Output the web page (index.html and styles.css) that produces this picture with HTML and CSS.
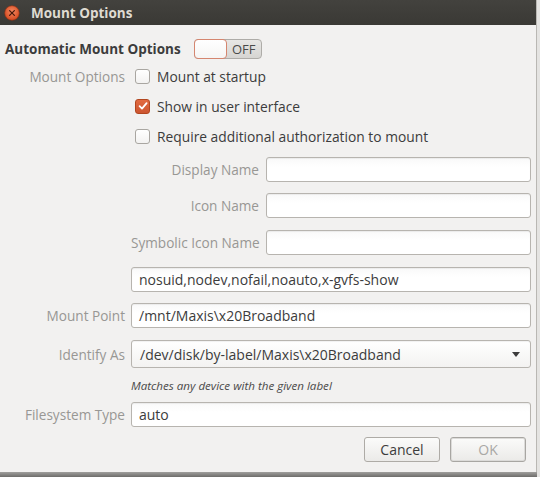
FILE: index.html
```html
<!DOCTYPE html>
<html lang="en">
<head>
  <meta charset="UTF-8" />
  <title>Mount Options</title>
  <link rel="stylesheet" href="styles.css">
</head>
<body>
  <div class="window">
    <div class="titlebar">
      <svg class="close" width="16" height="16" viewBox="0 0 16 16">
        <defs>
          <radialGradient id="cg" cx="50%" cy="40%" r="60%">
            <stop offset="0" stop-color="#f58a62" />
            <stop offset="1" stop-color="#d4481e" />
          </radialGradient>
        </defs>
        <circle cx="8" cy="8" r="7.3" fill="url(#cg)" stroke="#8e2f12" stroke-width="0.6" />
        <path d="M5.6 5.6 L10.4 10.4 M10.4 5.6 L5.6 10.4" stroke="#4a1a0c" stroke-width="1.3" stroke-linecap="round" />
      </svg>
      <span class="title">Mount Options</span>
    </div>

    <div class="content">
      <div class="auto-row">
        <span class="auto-label">Automatic Mount Options</span>
        <div class="switch">
          <span class="knob"></span>
          <span class="switch-text">OFF</span>
        </div>
      </div>

      <div class="row check-row first">
        <span class="label">Mount Options</span>
        <div class="cell"><span class="box"></span>Mount at startup</div>
      </div>
      <div class="row check-row">
        <span class="label"></span>
        <div class="cell">
          <span class="box checked">
            <svg width="10" height="10" viewBox="0 0 10 10"><path d="M1.6 5.2 L4 7.6 L8.6 2.2" fill="none" stroke="#fff" stroke-width="1.8" stroke-linecap="round" stroke-linejoin="round" /></svg>
          </span>Show in user interface
        </div>
      </div>
      <div class="row check-row">
        <span class="label"></span>
        <div class="cell"><span class="box"></span>Require additional authorization to mount</div>
      </div>

      <div class="row sub r-display">
        <span class="label"></span>
        <div class="cell">
          <span class="sublabel">Display Name</span>
          <div class="entry"></div>
        </div>
      </div>
      <div class="row sub r-icon">
        <span class="label"></span>
        <div class="cell">
          <span class="sublabel">Icon Name</span>
          <div class="entry"></div>
        </div>
      </div>
      <div class="row sub r-symbolic">
        <span class="label"></span>
        <div class="cell">
          <span class="sublabel">Symbolic Icon Name</span>
          <div class="entry"></div>
        </div>
      </div>

      <div class="row r-options">
        <span class="label"></span>
        <div class="entry">nosuid,nodev,nofail,noauto,x-gvfs-show</div>
      </div>
      <div class="row r-mount">
        <span class="label">Mount Point</span>
        <div class="entry">/mnt/Maxis\x20Broadband</div>
      </div>
      <div class="row r-identify">
        <span class="label">Identify As</span>
        <div class="entry combo">
          <span>/dev/disk/by-label/Maxis\x20Broadband</span>
          <span class="arrow"></span>
        </div>
      </div>
      <div class="row r-hint">
        <span class="label"></span>
        <span class="hint">Matches any device with the given label</span>
      </div>
      <div class="row r-fs">
        <span class="label">Filesystem Type</span>
        <div class="entry">auto</div>
      </div>

      <div class="buttons">
        <button class="btn">Cancel</button>
        <button class="btn default" disabled>OK</button>
      </div>
    </div>
  </div>
  <div class="shadow"></div>
</body>
</html>
```

FILE: styles.css
```css
* { box-sizing: border-box; }
body {
  margin: 0;
  width: 540px;
  height: 477px;
  overflow: hidden;
  background: #e4e3e1;
  font-family: 'Open Sans', sans-serif;
  font-size: 13.8px;
  color: #3c3c3c;
}
.window {
  width: 537px;
  height: 472px;
  background: #f2f1f0;
  border-right: 1px solid #b9b7b3;
}
.titlebar {
  height: 25px;
  background: linear-gradient(#43423e, #3a3935);
  display: flex;
  align-items: center;
  padding-left: 4px;
  gap: 11px;
}
.close { display: block; }
.title {
  color: #dfdbd2;
  font-weight: bold;
  font-size: 13.5px;
}
.content {
  padding: 13px 5px 0 0;
}
.auto-row {
  display: flex;
  align-items: center;
  gap: 13px;
  height: 20px;
  margin-top: 1px;
  padding-left: 5px;
}
.auto-label {
  font-weight: bold;
  font-size: 13.5px;
  color: #3c3c3c;
}
.switch {
  width: 68px;
  height: 20px;
  display: flex;
  border: 1px solid #aeaca8;
  border-radius: 4px;
  background: linear-gradient(#e8e7e5, #d6d5d2);
}
.knob {
  width: 33px;
  margin: -1px 0 -1px -1px;
  border: 1px solid #d5866f;
  border-radius: 4px;
  background: linear-gradient(#ffffff, #f6f5f4);
}
.switch-text {
  flex: 1;
  text-align: center;
  line-height: 18px;
  font-size: 13px;
  color: #4a4a4a;
}

.row {
  display: flex;
  align-items: center;
  gap: 6px;
}
.label,
.sublabel {
  flex: none;
  text-align: right;
  white-space: nowrap;
  font-size: 13.6px;
  color: #989794;
}
.label { width: 125px; }
.sublabel { width: 128px; }
.row .cell {
  flex: 1;
  display: flex;
  align-items: center;
}
.check-row { height: 30px; }
.check-row.first { margin-top: 2px; }
.check-row .cell { padding-left: 4px; }
.box {
  width: 15px;
  height: 15px;
  margin-right: 7px;
  border: 1px solid #a9a6a1;
  border-radius: 3px;
  background: linear-gradient(#ffffff, #f3f2f1);
  display: flex;
  align-items: center;
  justify-content: center;
}
.box.checked {
  background: linear-gradient(#e26b41, #cc5530);
  border-color: #b2461f;
}
.box svg { display: block; }

.sub .cell { gap: 7px; }
.entry {
  flex: 1;
  height: 25px;
  border: 1px solid #b7b4af;
  border-radius: 3px;
  background: linear-gradient(#f9f9f9, #ffffff 40%);
  box-shadow: inset 0 1px 1px rgba(0, 0, 0, 0.06);
  display: flex;
  align-items: center;
  padding: 0 7px;
  font-size: 14px;
  color: #3c3c3c;
}
.r-display { margin-top: 6px; }
.r-icon { margin-top: 11px; }
.r-symbolic { margin-top: 12px; }
.r-options { margin-top: 12px; }
.r-mount { margin-top: 11px; }
.r-identify { margin-top: 12px; }
.combo {
  height: 28px;
  justify-content: space-between;
  padding: 0 10px 0 8px;
  background: linear-gradient(#ffffff, #f3f2f1);
}
.arrow {
  width: 0;
  height: 0;
  border-left: 4px solid transparent;
  border-right: 4px solid transparent;
  border-top: 5px solid #3c3c3c;
}
.r-hint { height: 34px; }
.hint {
  font-style: italic;
  font-size: 11.6px;
  color: #4a4a4a;
}
.buttons {
  display: flex;
  justify-content: flex-end;
  gap: 10px;
  margin-top: 10px;
  padding-right: 5px;
}
.btn {
  width: 76px;
  height: 25px;
  border: 1px solid #aeaba6;
  border-radius: 3px;
  background: linear-gradient(#fbfbfa, #ebeae8);
  font-family: 'Open Sans', sans-serif;
  font-size: 14px;
  color: #3c3c3c;
  padding: 0;
}
.btn.default {
  border-color: #a8a6a2;
  box-shadow: inset 0 0 0 1px #dcdbd9;
  color: #a9a8a5;
}
.shadow {
  height: 5px;
  width: 537px;
  background: linear-gradient(#a09f9d, #6e6d6b);
}
```
